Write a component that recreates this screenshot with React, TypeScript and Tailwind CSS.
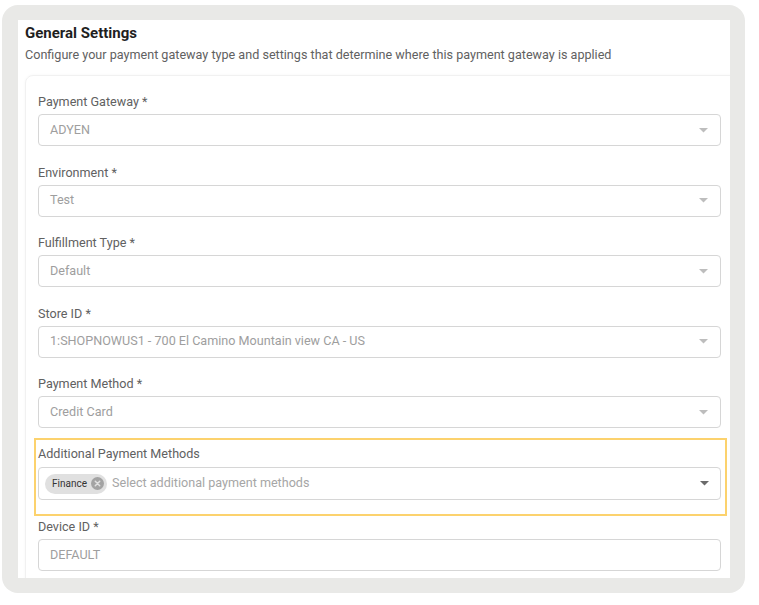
const font = { fontFamily: "Roboto, 'Liberation Sans', sans-serif" };

function Caret({ dark }: { dark?: boolean }) {
  return (
    <svg width="9" height="5" viewBox="0 0 9 5" className="shrink-0">
      <path d="M0 0h9L4.5 4.5z" fill={dark ? "#6b6b6b" : "#bdbdbd"} />
    </svg>
  );
}

function SelectField({ label, value }: { label: string; value: string }) {
  return (
    <div className="flex flex-col">
      <label className="h-[16px] text-[12.6px] leading-[16px] text-[#616161]">{label}</label>
      <div className="mt-[4px] flex h-[32px] w-[683px] items-center justify-between rounded-[4px] border border-[#d6d6d6] bg-white pl-[11px] pr-[12px]">
        <span className="text-[12.6px] text-[#9e9e9e]">{value}</span>
        <Caret />
      </div>
    </div>
  );
}

export default function App() {
  const fields = [
    { label: "Payment Gateway *", value: "ADYEN" },
    { label: "Environment *", value: "Test" },
    { label: "Fulfillment Type *", value: "Default" },
    { label: "Store ID *", value: "1:SHOPNOWUS1 - 700 El Camino Mountain view CA - US" },
    { label: "Payment Method *", value: "Credit Card" },
  ];

  return (
    <div className="h-[605px] w-[759px] bg-white pl-[2px] pt-[5px]" style={font}>
      <div className="h-[588px] w-[743px] rounded-[16px] bg-[#e9e9e7] pl-[16px] pt-[15px]">
        <div className="h-[558px] w-[712px] overflow-hidden bg-white">
          <div className="pl-[7px] pt-[3px]">
            <h2 className="text-[15px] font-bold leading-[20px] text-[#1f1f1f]">General Settings</h2>
            <p className="mt-[3px] text-[12.6px] leading-[18px] text-[#616161]">
              Configure your payment gateway type and settings that determine where this payment gateway is applied
            </p>
          </div>

          <div className="ml-[7px] mt-[11px] w-[740px] rounded-tl-[8px] border border-[#f1f1f1] pl-[12px] pt-[18px] pb-[20px] shadow-[0_0_3px_rgba(0,0,0,0.04)]">
            <div className="flex flex-col gap-[18.5px]">
              {fields.map((f) => (
                <SelectField key={f.label} label={f.label} value={f.value} />
              ))}
            </div>

            <div className="-ml-[4px] mt-[10px] w-[693px] border-2 border-[#fcd26d] px-[2px] pb-[14px] pt-[6px]">
              <label className="block h-[16px] text-[12.6px] leading-[16px] text-[#616161]">
                Additional Payment Methods
              </label>
              <div className="mt-[5px] flex h-[33px] w-[683px] items-center justify-between rounded-[4px] border border-[#d6d6d6] bg-white pl-[6px] pr-[11px]">
                <div className="flex items-center gap-[5px]">
                  <span className="flex h-[20px] items-center gap-[4px] rounded-full bg-[#e0e0e0] pl-[7px] pr-[3px] text-[10px] text-[#333]">
                    Finance
                    <svg width="13" height="13" viewBox="0 0 14 14">
                      <circle cx="7" cy="7" r="7" fill="#a3a3a3" />
                      <path d="M4.6 4.6l4.8 4.8M9.4 4.6l-4.8 4.8" stroke="#e0e0e0" strokeWidth="1.6" strokeLinecap="round" />
                    </svg>
                  </span>
                  <span className="text-[12.6px] text-[#a6a6a6]">Select additional payment methods</span>
                </div>
                <Caret dark />
              </div>
            </div>

            <div className="mt-[3px] flex flex-col">
              <label className="h-[16px] text-[12.6px] leading-[16px] text-[#616161]">Device ID *</label>
              <div className="mt-[4px] flex h-[32px] w-[683px] items-center rounded-[4px] border border-[#d6d6d6] bg-white pl-[11px]">
                <span className="text-[12.6px] text-[#9e9e9e]">DEFAULT</span>
              </div>
            </div>
          </div>
        </div>
      </div>
    </div>
  );
}
